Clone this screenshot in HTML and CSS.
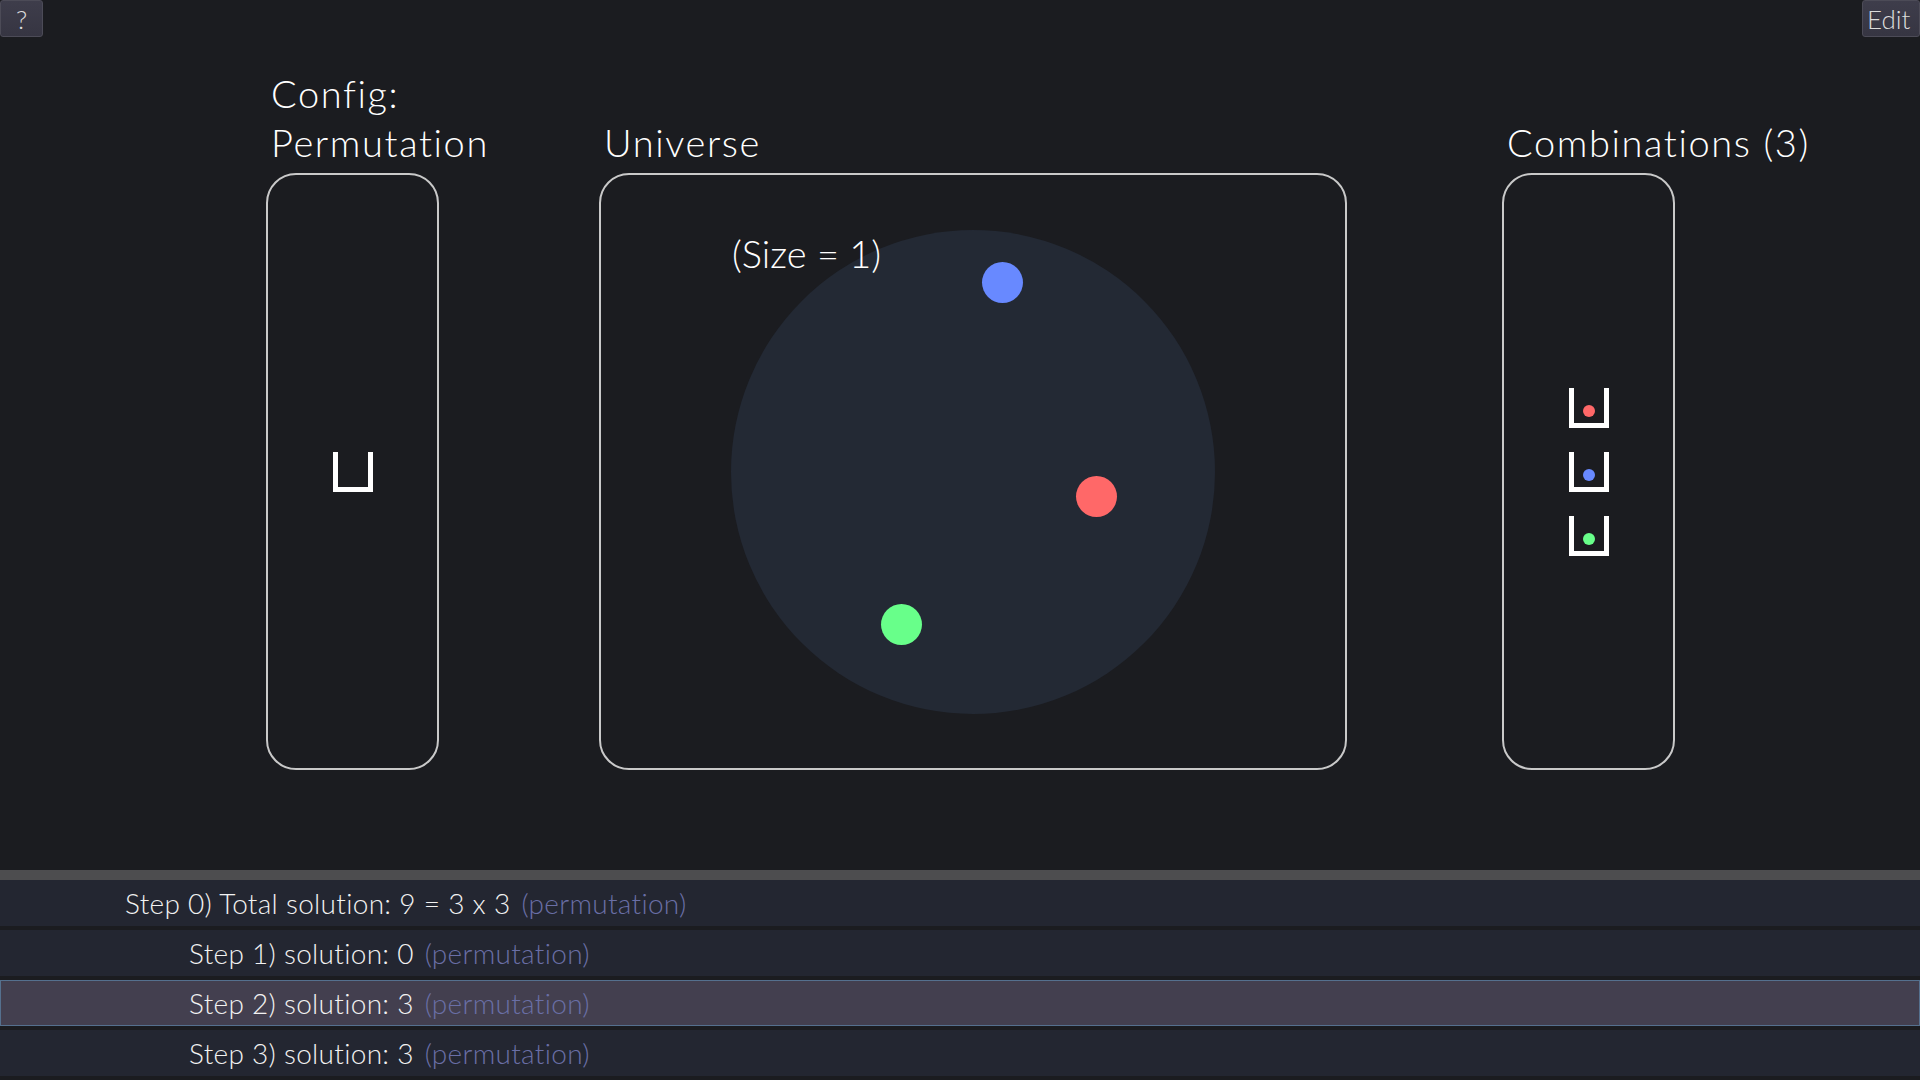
FILE: index.html
```html
<!DOCTYPE html>
<html>
<head>
<meta charset="utf-8">
<link rel="stylesheet" href="styles.css">
</head>
<body>
<div class="top">
  <div class="toolbar">
    <button class="tb-btn help">?</button>
    <button class="tb-btn edit">Edit</button>
  </div>
  <div class="columns">
    <div class="col col-config">
      <div class="title">Config:<br>Permutation</div>
      <div class="panel narrow">
        <div class="slot big"></div>
      </div>
    </div>
    <div class="col col-universe">
      <div class="title">Universe</div>
      <div class="panel wide">
        <div class="size-label">(Size = 1)</div>
        <div class="universe">
          <span class="dot blue" style="left:251px;top:32px"></span>
          <span class="dot red" style="left:345px;top:246px"></span>
          <span class="dot green" style="left:150px;top:374px"></span>
        </div>
      </div>
    </div>
    <div class="col col-combos">
      <div class="title">Combinations (3)</div>
      <div class="panel narrow">
        <div class="combo-list">
          <div class="slot small"><span class="mini red"></span></div>
          <div class="slot small"><span class="mini blue"></span></div>
          <div class="slot small"><span class="mini green"></span></div>
        </div>
      </div>
    </div>
  </div>
</div>
<div class="steps">
  <div class="step lvl0">Step 0) Total solution: 9 = 3 x 3 <span class="tag">(permutation)</span></div>
  <div class="step lvl1">Step 1) solution: 0 <span class="tag">(permutation)</span></div>
  <div class="step lvl1 active">Step 2) solution: 3 <span class="tag">(permutation)</span></div>
  <div class="step lvl1">Step 3) solution: 3 <span class="tag">(permutation)</span></div>
</div>
</body>
</html>
```
FILE: styles.css
```css
html, body {
  margin: 0;
  padding: 0;
}
body {
  width: 1920px;
  height: 1080px;
  overflow: hidden;
  background: #1b1c20;
  color: #ffffff;
  font-family: "Lato", "Noto Sans", sans-serif;
  display: flex;
  flex-direction: column;
}
.top {
  height: 870px;
  display: flex;
  flex-direction: column;
}
.toolbar {
  height: 37px;
  display: flex;
  justify-content: space-between;
  align-items: flex-start;
}
.tb-btn {
  height: 37px;
  margin: 0;
  padding: 0;
  background: linear-gradient(#3e3d4b, #363542);
  border: 1px solid #4c4b57;
  border-radius: 3px;
  color: #dcdcdc;
  font-family: "Lato", "Noto Sans", sans-serif;
  font-weight: 300;
}
.help {
  width: 43px;
  font-size: 26px;
}
.edit {
  width: 58px;
  font-size: 26px;
  text-align: left;
  padding-left: 4px;
}
.columns {
  display: flex;
  align-items: flex-start;
  padding-left: 266px;
}
.col {
  display: flex;
  flex-direction: column;
}
.col-config,
.col-combos {
  width: 173px;
}
.col-universe {
  width: 748px;
  margin-left: 160px;
}
.col-combos {
  margin-left: 155px;
}
.title {
  height: 136px;
  box-sizing: border-box;
  display: flex;
  flex-direction: column;
  justify-content: flex-end;
  font-size: 38px;
  font-weight: 300;
  letter-spacing: 1.6px;
  line-height: 49px;
  padding-bottom: 6px;
  padding-left: 5px;
  white-space: nowrap;
  overflow: visible;
}
.col-config .title {
  display: block;
  padding-top: 32px;
}
.panel {
  position: relative;
  box-sizing: border-box;
  height: 597px;
  border: 2px solid #c9c9c9;
  border-radius: 30px;
  display: flex;
  align-items: center;
  justify-content: center;
}
.narrow {
  width: 173px;
}
.wide {
  width: 748px;
}
.slot {
  box-sizing: border-box;
  border: 5px solid #ffffff;
  border-top: none;
  position: relative;
}
.slot.big {
  width: 40px;
  height: 40px;
}
.combo-list {
  display: flex;
  flex-direction: column;
  gap: 24px;
}
.slot.small {
  width: 40px;
  height: 40px;
}
.mini {
  position: absolute;
  left: 9px;
  top: 17px;
  width: 12px;
  height: 12px;
  border-radius: 50%;
}
.universe {
  position: relative;
  width: 484px;
  height: 484px;
  border-radius: 50%;
  background: #232934;
}
.size-label {
  position: absolute;
  left: 131px;
  top: 54px;
  font-size: 38px;
  font-weight: 300;
  line-height: 49px;
  z-index: 1;
  white-space: nowrap;
}
.dot {
  position: absolute;
  width: 41px;
  height: 41px;
  border-radius: 50%;
}
.red { background: #ff6868; }
.blue { background: #6889ff; }
.green { background: #68ff8a; }
.steps {
  flex: 1;
  border-top: 10px solid #4d4d4f;
  display: flex;
  flex-direction: column;
  gap: 4px;
}
.step {
  height: 46px;
  box-sizing: border-box;
  background: #232631;
  font-size: 28px;
  font-weight: 300;
  letter-spacing: 0.3px;
  line-height: 46px;
  color: #f2f2f2;
  white-space: nowrap;
}
.lvl0 {
  padding-left: 125px;
}
.lvl1 {
  padding-left: 189px;
}
.step.active {
  background: #433f4f;
  border: 1px solid #55708e;
  line-height: 44px;
  padding-left: 188px;
}
.tag {
  color: #6a6fa6;
  margin-left: 3px;
}
```
